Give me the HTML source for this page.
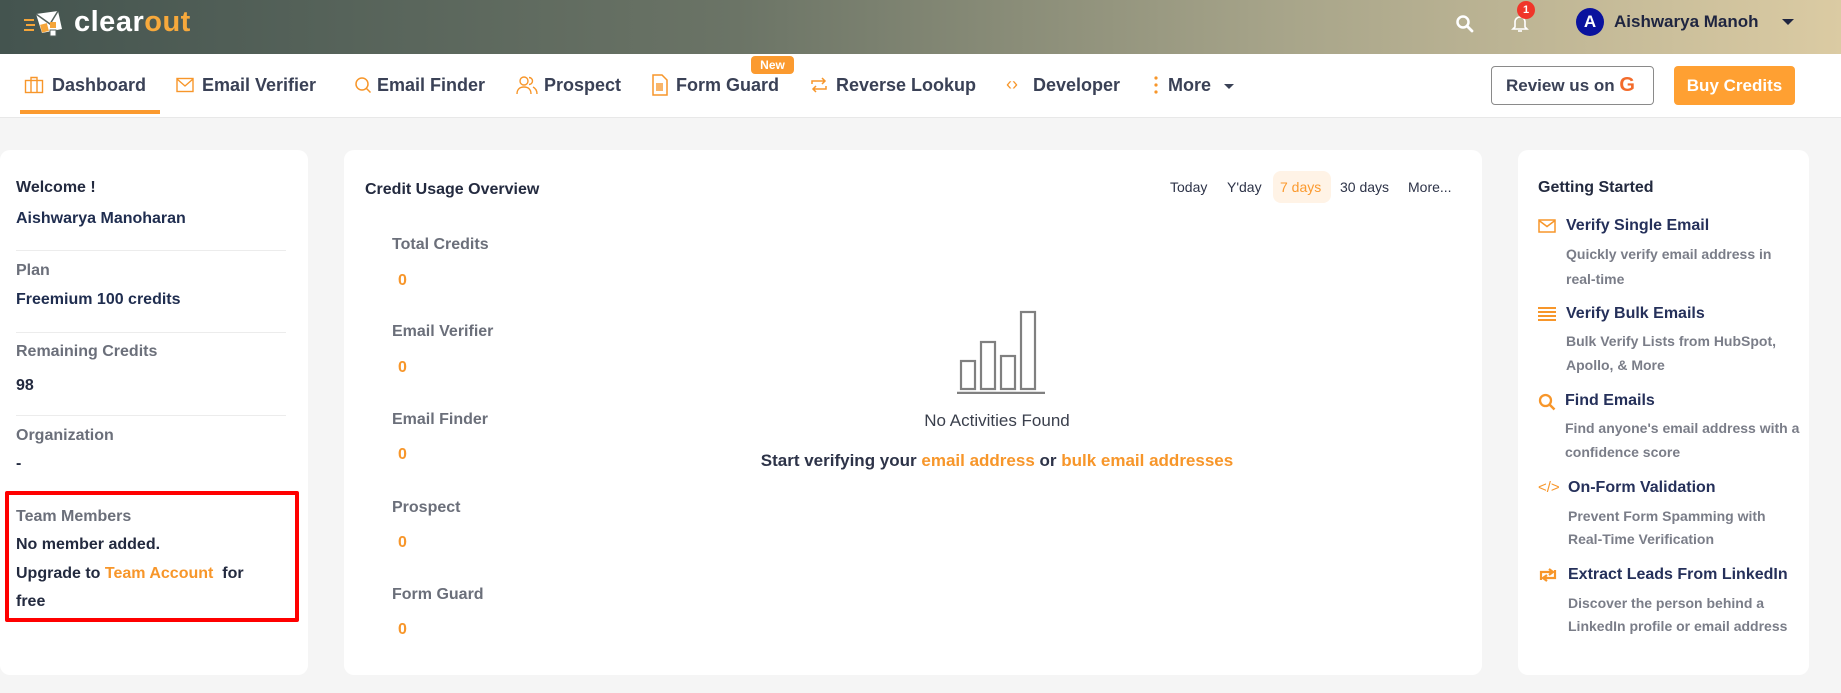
<!DOCTYPE html>
<html><head><meta charset="utf-8"><style>
*{margin:0;padding:0;box-sizing:border-box}
body{width:1841px;height:693px;overflow:hidden;background:#f5f5f5;font-family:"Liberation Sans",sans-serif;position:relative;color:#2d3348}
.abs{position:absolute;white-space:nowrap}
.hdr{position:absolute;left:0;top:0;width:1841px;height:54px;background:linear-gradient(90deg,#44544f 0%,#6b7466 40%,#a8a58a 70%,#dbcba3 100%)}
.nav{position:absolute;left:0;top:54px;width:1841px;height:64px;background:#fff;border-bottom:1px solid #e8e8e8}
.ni{position:absolute;top:75px;font-size:18px;font-weight:bold;color:#3a4156;line-height:20px;white-space:nowrap}
.card{position:absolute;background:#fff;border-radius:10px}
.lbl{font-size:16px;color:#6b6f7a;font-weight:bold}
.val{font-size:16px;color:#232a3f;font-weight:bold}
.hr{position:absolute;left:16px;width:270px;height:1px;background:#ececec}
.o{color:#f7962a}
.gt{font-size:16px;font-weight:bold;color:#25305a}
.gd{font-size:14px;font-weight:bold;color:#7a7d88}
.wrap{position:absolute;left:0;top:4px;width:1841px;height:680px}
</style></head><body>
<div class="hdr"></div>
<svg class="abs" style="left:22px;top:8px" width="48" height="32" viewBox="0 0 48 32">
<path d="M2 12h10M4 17h9M2 22h10" stroke="#f5a53a" stroke-width="2"/>
<path d="M14 6l22-3 4 18-20 4z" fill="#fff"/>
<path d="M14 6l14 10 8-13" fill="none" stroke="#55625d" stroke-width="1.5"/>
<rect x="19" y="16" width="7" height="8" fill="#f5a53a" transform="rotate(-15 22 20)"/>
<rect x="28" y="14" width="6" height="6" fill="#f5a53a"/>
<rect x="28" y="22" width="6" height="6" fill="#fff" stroke="#55625d"/>
</svg>
<div class="abs" style="left:74px;top:6px;font-size:29px;font-weight:bold;color:#fff;letter-spacing:0.5px">clear<span style="color:#f7a93c">out</span></div>
<svg class="abs" style="left:1455px;top:14px" width="20" height="20" viewBox="0 0 20 20"><circle cx="8" cy="8" r="5.5" fill="none" stroke="#fff" stroke-width="2.5"/><path d="M12 12l5 5" stroke="#fff" stroke-width="2.8" stroke-linecap="round"/></svg>
<svg class="abs" style="left:1509px;top:12px" width="22" height="22" viewBox="0 0 22 22"><path d="M6 15V10a5 5 0 0 1 10 0v5l2 2H4z" fill="none" stroke="#fff" stroke-width="1.6"/><path d="M9 19h4" stroke="#fff" stroke-width="1.6"/></svg>
<div class="abs" style="left:1517px;top:1px;width:18px;height:18px;border-radius:9px;background:#f0352a;color:#fff;font-size:11px;font-weight:bold;text-align:center;line-height:18px">1</div>
<div class="abs" style="left:1576px;top:8px;width:28px;height:28px;border-radius:14px;background:#0a129e;color:#fff;font-size:17px;font-weight:bold;text-align:center;line-height:28px">A</div>
<div class="abs" style="left:1614px;top:12px;font-size:17px;font-weight:bold;color:#1f2540">Aishwarya Manoh</div>
<div class="abs" style="left:1782px;top:19px;width:0;height:0;border-left:6px solid transparent;border-right:6px solid transparent;border-top:6px solid #1f2540"></div>

<div class="nav"></div>
<svg class="abs" style="left:24px;top:76px" width="20" height="18" viewBox="0 0 20 18"><rect x="1.5" y="4.5" width="17" height="12" fill="none" stroke="#f7962a" stroke-width="1.4"/><path d="M7 4.5V1.5h6v3M7 4.5v12M13 4.5v12" fill="none" stroke="#f7962a" stroke-width="1.4"/></svg>
<div class="ni" style="left:52px">Dashboard</div>
<div class="abs" style="left:20px;top:110px;width:140px;height:4px;background:#fb9a2f"></div>
<svg class="abs" style="left:176px;top:77px" width="18" height="16" viewBox="0 0 18 16"><rect x="1" y="1.5" width="16" height="13" fill="none" stroke="#f7962a" stroke-width="1.4"/><path d="M1 2l8 7 8-7" fill="none" stroke="#f7962a" stroke-width="1.4"/></svg>
<div class="ni" style="left:202px">Email Verifier</div>
<svg class="abs" style="left:354px;top:76px" width="18" height="18" viewBox="0 0 18 18"><circle cx="8" cy="8" r="6" fill="none" stroke="#f7962a" stroke-width="1.5"/><path d="M12.5 12.5l4 4" stroke="#f7962a" stroke-width="1.5"/></svg>
<div class="ni" style="left:377px">Email Finder</div>
<svg class="abs" style="left:516px;top:75px" width="22" height="20" viewBox="0 0 22 20"><circle cx="8" cy="6" r="4" fill="none" stroke="#f7962a" stroke-width="1.4"/><path d="M1 19c0-5 3-7 7-7s7 2 7 7" fill="none" stroke="#f7962a" stroke-width="1.4"/><path d="M13 2.5a3.5 3.5 0 0 1 0 7M17 12c2 1 4 3 4 7" fill="none" stroke="#f7962a" stroke-width="1.4"/></svg>
<div class="ni" style="left:544px">Prospect</div>
<svg class="abs" style="left:651px;top:74px" width="18" height="22" viewBox="0 0 18 22"><path d="M2 1h9l5 5v15H2z" fill="none" stroke="#f7962a" stroke-width="1.5"/><rect x="5" y="9" width="7" height="8" fill="#f7962a" opacity=".7"/></svg>
<div class="ni" style="left:676px">Form Guard</div>
<div class="abs" style="left:751px;top:56px;width:43px;height:18px;border-radius:4px;background:#fb9a2f;color:#fff;font-size:12px;font-weight:bold;text-align:center;line-height:18px">New</div>
<svg class="abs" style="left:810px;top:75px" width="18" height="20" viewBox="0 0 18 20"><path d="M2 9V6h13M12 3l3 3-3 3M16 11v3H3M6 17l-3-3 3-3" fill="none" stroke="#f7962a" stroke-width="1.5"/></svg>
<div class="ni" style="left:836px">Reverse Lookup</div>
<div class="abs" style="left:1006px;top:74px;font-size:18px;color:#f7962a">&lsaquo;&rsaquo;</div>
<div class="ni" style="left:1033px">Developer</div>
<svg class="abs" style="left:1154px;top:76px" width="4" height="18"><circle cx="2" cy="2" r="1.6" fill="#f7962a"/><circle cx="2" cy="9" r="1.6" fill="#f7962a"/><circle cx="2" cy="16" r="1.6" fill="#f7962a"/></svg>
<div class="ni" style="left:1168px">More</div>
<div class="abs" style="left:1224px;top:84px;width:0;height:0;border-left:5px solid transparent;border-right:5px solid transparent;border-top:5px solid #3a4156"></div>
<div class="abs" style="left:1491px;top:66px;width:163px;height:39px;border:1.5px solid #8a8a8a;border-radius:4px;background:#fff;font-size:17px;font-weight:bold;color:#3a4156;line-height:36px;padding-left:14px">Review us on <span style="color:#f36b2b;font-size:20px">G</span></div>
<div class="abs" style="left:1674px;top:66px;width:121px;height:39px;border-radius:4px;background:#ffa032;color:#fff;font-size:17px;font-weight:bold;text-align:center;line-height:39px">Buy Credits</div>

<div class="card" style="left:0;top:150px;width:308px;height:525px"></div>
<div class="card" style="left:344px;top:150px;width:1138px;height:525px"></div>
<div class="card" style="left:1518px;top:150px;width:291px;height:525px"></div>

<div class="wrap">
<!-- Left card -->
<div class="abs val" style="left:16px;top:175px">Welcome !</div>
<div class="abs val" style="left:16px;top:206px;color:#1f2d4f">Aishwarya Manoharan</div>
<div class="hr" style="top:246px"></div>
<div class="abs lbl" style="left:16px;top:258px">Plan</div>
<div class="abs val" style="left:16px;top:287px;color:#1f2d4f">Freemium 100 credits</div>
<div class="hr" style="top:328px"></div>
<div class="abs lbl" style="left:16px;top:339px">Remaining Credits</div>
<div class="abs val" style="left:16px;top:373px">98</div>
<div class="hr" style="top:411px"></div>
<div class="abs lbl" style="left:16px;top:423px">Organization</div>
<div class="abs val" style="left:16px;top:451px">-</div>
<div class="abs" style="left:5px;top:487px;width:294px;height:131px;border:4px solid #ff0000;border-radius:2px"></div>
<div class="abs lbl" style="left:16px;top:504px">Team Members</div>
<div class="abs val" style="left:16px;top:532px">No member added.</div>
<div class="abs val" style="left:16px;top:561px">Upgrade to <span class="o">Team Account</span>&nbsp; for</div>
<div class="abs val" style="left:16px;top:589px">free</div>

<!-- Middle card -->
<div class="abs val" style="left:365px;top:177px">Credit Usage Overview</div>
<div class="abs" style="left:1273px;top:167px;width:58px;height:32px;border-radius:8px;background:#fff3e6"></div>
<div class="abs" style="left:1170px;top:175px;font-size:14px;color:#2d3348">Today</div>
<div class="abs" style="left:1227px;top:175px;font-size:14px;color:#2d3348">Y'day</div>
<div class="abs" style="left:1280px;top:175px;font-size:14px;color:#fb9a2f">7 days</div>
<div class="abs" style="left:1340px;top:175px;font-size:14px;color:#2d3348">30 days</div>
<div class="abs" style="left:1408px;top:175px;font-size:14px;color:#2d3348">More...</div>
<div class="abs lbl" style="left:392px;top:232px">Total Credits</div>
<div class="abs val o" style="left:398px;top:268px">0</div>
<div class="abs lbl" style="left:392px;top:319px">Email Verifier</div>
<div class="abs val o" style="left:398px;top:355px">0</div>
<div class="abs lbl" style="left:392px;top:407px">Email Finder</div>
<div class="abs val o" style="left:398px;top:442px">0</div>
<div class="abs lbl" style="left:392px;top:495px">Prospect</div>
<div class="abs val o" style="left:398px;top:530px">0</div>
<div class="abs lbl" style="left:392px;top:582px">Form Guard</div>
<div class="abs val o" style="left:398px;top:617px">0</div>
<svg class="abs" style="left:956px;top:302px" width="90" height="88" viewBox="0 0 90 88">
<g fill="none" stroke="#808080" stroke-width="2.2"><rect x="5" y="55" width="14" height="28"/><rect x="25" y="36" width="14" height="47"/><rect x="45" y="50" width="14" height="33"/><rect x="65" y="6" width="14" height="77"/></g>
<path d="M1 87h88" stroke="#808080" stroke-width="2.5"/></svg>
<div class="abs" style="left:897px;top:407px;width:200px;text-align:center;font-size:17px;color:#3a3f4c">No Activities Found</div>
<div class="abs" style="left:697px;top:447px;width:600px;text-align:center;font-size:17px;font-weight:bold;color:#2d3348">Start verifying your <span class="o">email address</span> or <span class="o">bulk email addresses</span></div>

<!-- Right card -->
<div class="abs val" style="left:1538px;top:175px">Getting Started</div>
<svg class="abs" style="left:1538px;top:215px" width="18" height="15" viewBox="0 0 18 15"><rect x="1" y="1" width="16" height="12" fill="none" stroke="#f7962a" stroke-width="1.5"/><path d="M1 1.5l8 6 8-6" fill="none" stroke="#f7962a" stroke-width="1.5"/></svg>
<div class="abs gt" style="left:1566px;top:213px">Verify Single Email</div>
<div class="abs gd" style="left:1566px;top:242px">Quickly verify email address in</div>
<div class="abs gd" style="left:1566px;top:267px">real-time</div>
<svg class="abs" style="left:1538px;top:303px" width="18" height="14" viewBox="0 0 18 14"><g fill="#f7962a"><rect y="0" width="18" height="2"/><rect y="4" width="18" height="2"/><rect y="8" width="18" height="2"/><rect y="12" width="18" height="2"/></g></svg>
<div class="abs gt" style="left:1566px;top:301px">Verify Bulk Emails</div>
<div class="abs gd" style="left:1566px;top:329px">Bulk Verify Lists from HubSpot,</div>
<div class="abs gd" style="left:1566px;top:353px">Apollo, &amp; More</div>
<svg class="abs" style="left:1538px;top:389px" width="18" height="18" viewBox="0 0 18 18"><circle cx="7.5" cy="7.5" r="5.5" fill="none" stroke="#f7962a" stroke-width="2.3"/><path d="M11.5 11.5l5 5" stroke="#f7962a" stroke-width="2.5"/></svg>
<div class="abs gt" style="left:1565px;top:388px">Find Emails</div>
<div class="abs gd" style="left:1565px;top:416px">Find anyone's email address with a</div>
<div class="abs gd" style="left:1565px;top:440px">confidence score</div>
<div class="abs" style="left:1538px;top:475px;font-size:15px;color:#f7962a">&lt;/&gt;</div>
<div class="abs gt" style="left:1568px;top:475px">On-Form Validation</div>
<div class="abs gd" style="left:1568px;top:504px">Prevent Form Spamming with</div>
<div class="abs gd" style="left:1568px;top:527px">Real-Time Verification</div>
<svg class="abs" style="left:1538px;top:564px" width="20" height="14" viewBox="0 0 20 14"><path d="M3 12V4h11M11 1l4 3-4 3M17 2v8H6M9 13l-4-3 4-3" fill="none" stroke="#f7962a" stroke-width="2.2"/></svg>
<div class="abs gt" style="left:1568px;top:562px">Extract Leads From LinkedIn</div>
<div class="abs gd" style="left:1568px;top:591px">Discover the person behind a</div>
<div class="abs gd" style="left:1568px;top:614px">LinkedIn profile or email address</div>
</div>
</body></html>
